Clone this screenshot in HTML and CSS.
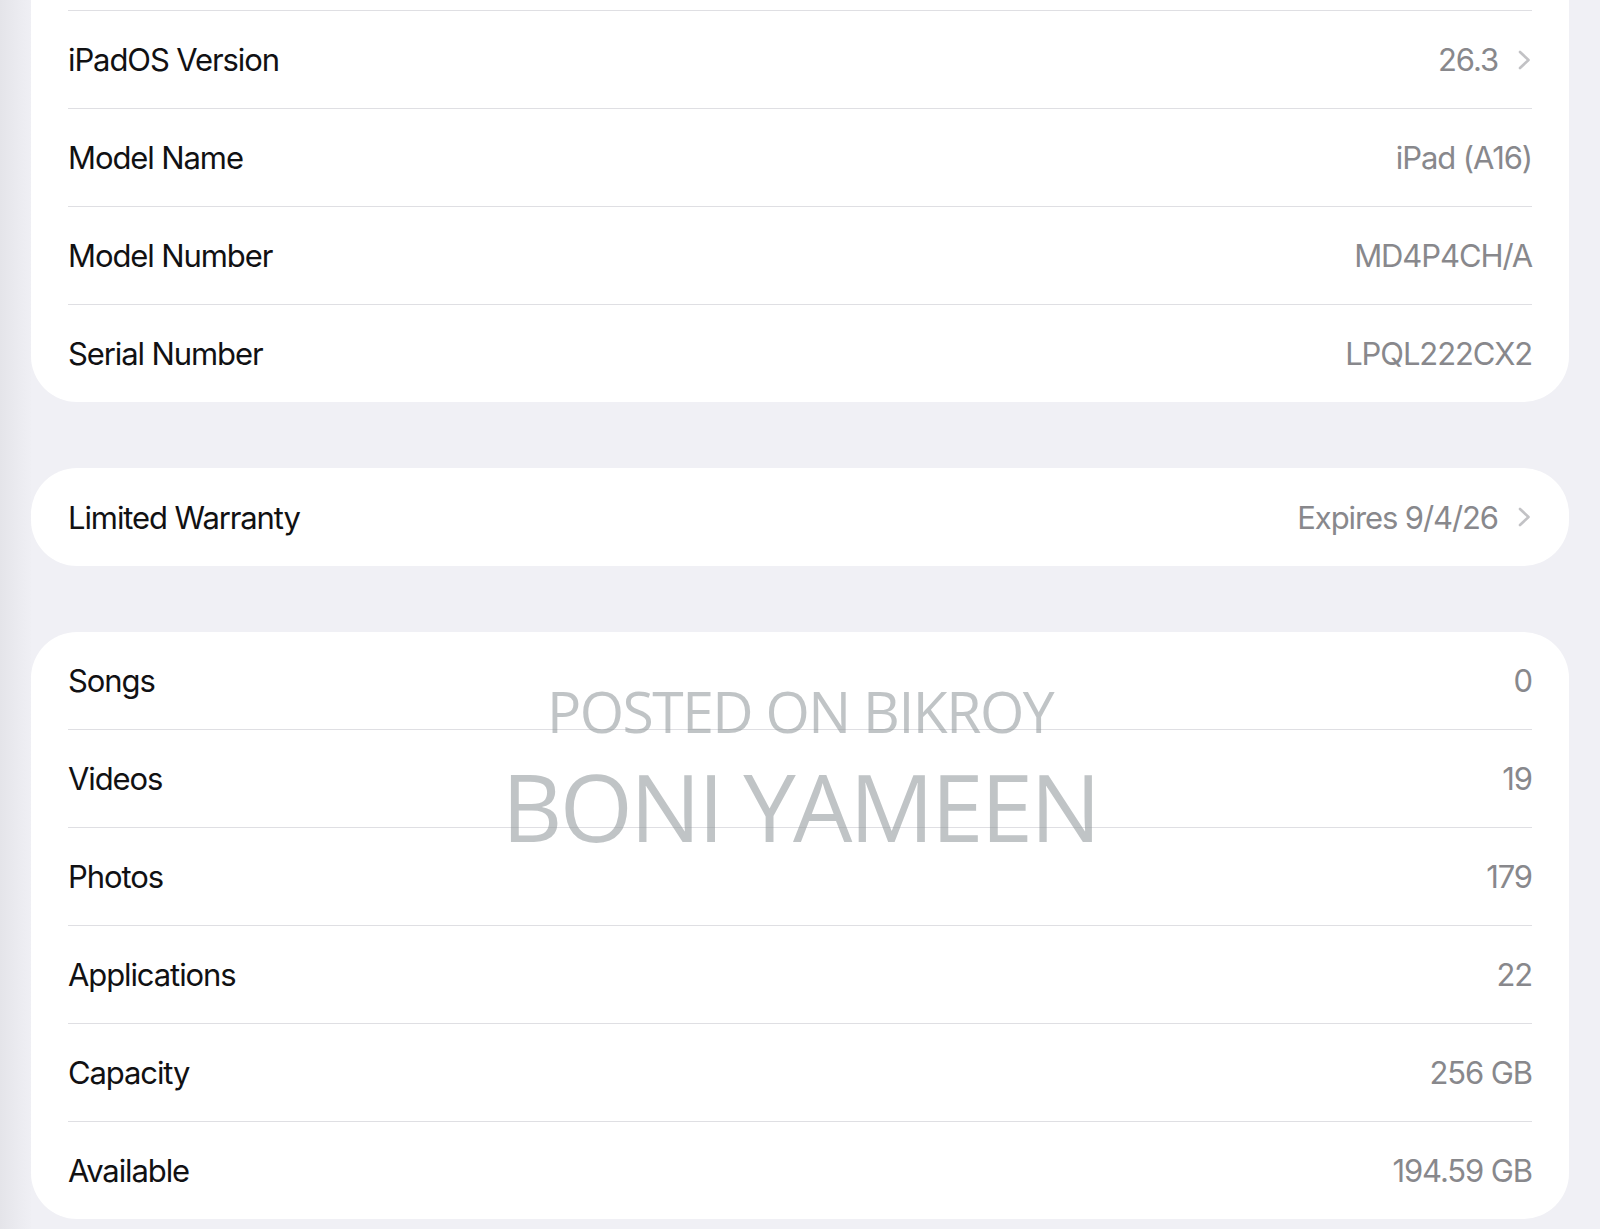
FILE: index.html
```html
<!DOCTYPE html>
<html lang="en">
<head>
<meta charset="utf-8">
<title>About</title>
<link rel="stylesheet" href="styles.css">
</head>
<body>
<div class="page">
  <div class="edge"></div>
  <main class="content">
    <section class="card card-first">
      <div class="row"><div class="row-inner"></div></div>
      <div class="row"><div class="row-inner"><span class="label">iPadOS Version</span><span class="value">26.3<svg class="chev" viewBox="0 0 13 20" width="13" height="20"><path d="M2 2 L10.5 10 L2 18" fill="none" stroke="currentColor" stroke-width="2.6" stroke-linecap="round" stroke-linejoin="round"/></svg></span></div></div>
      <div class="row"><div class="row-inner"><span class="label">Model Name</span><span class="value">iPad (A16)</span></div></div>
      <div class="row"><div class="row-inner"><span class="label">Model Number</span><span class="value">MD4P4CH/A</span></div></div>
      <div class="row"><div class="row-inner"><span class="label">Serial Number</span><span class="value">LPQL222CX2</span></div></div>
    </section>

    <section class="card card-single">
      <div class="row"><div class="row-inner"><span class="label">Limited Warranty</span><span class="value">Expires 9/4/26<svg class="chev" viewBox="0 0 13 20" width="13" height="20"><path d="M2 2 L10.5 10 L2 18" fill="none" stroke="currentColor" stroke-width="2.6" stroke-linecap="round" stroke-linejoin="round"/></svg></span></div></div>
    </section>

    <section class="card">
      <div class="row"><div class="row-inner"><span class="label">Songs</span><span class="value">0</span></div></div>
      <div class="row"><div class="row-inner"><span class="label">Videos</span><span class="value">19</span></div></div>
      <div class="row"><div class="row-inner"><span class="label">Photos</span><span class="value">179</span></div></div>
      <div class="row"><div class="row-inner"><span class="label">Applications</span><span class="value">22</span></div></div>
      <div class="row"><div class="row-inner"><span class="label">Capacity</span><span class="value">256 GB</span></div></div>
      <div class="row"><div class="row-inner"><span class="label">Available</span><span class="value">194.59 GB</span></div></div>
    </section>
  </main>
  <div class="watermark">
    <div class="wm-small">POSTED ON BIKROY</div>
    <div class="wm-big">BONI YAMEEN</div>
  </div>
</div>
</body>
</html>
```

FILE: styles.css
```css
html, body {
  margin: 0;
  padding: 0;
  height: 100%;
}
body {
  background: #f0f0f5;
  font-family: "Inter", "Roboto", "Liberation Sans", sans-serif;
  overflow: hidden;
}
.page {
  position: relative;
  width: 1600px;
  height: 1229px;
  overflow: hidden;
  display: flex;
  background: #f0f0f5;
}
.edge {
  width: 31px;
  flex: none;
  background: linear-gradient(to right, #e4e4e9 0%, #ebebf0 60%, #efeff4 100%);
}
.content {
  flex: 1;
  padding-right: 31px;
  display: flex;
  flex-direction: column;
  gap: 66px;
}
.card {
  background: #ffffff;
  border-radius: 46px;
}
.card-first {
  margin-top: -87px;
}
.row {
  padding: 0 37px 0 37px;
}
.row-inner {
  height: 97px;
  border-top: 1px solid #dfdfe3;
  display: flex;
  align-items: center;
  justify-content: space-between;
  font-size: 31px;
  letter-spacing: -1.1px;
}
.row:first-child .row-inner {
  border-top: none;
}
.card-single .row-inner {
  height: 98px;
}
.label {
  color: #111113;
}
.value {
  color: #88888c;
  display: flex;
  align-items: center;
}
.chev {
  color: #c2c2c5;
  margin-left: 20px;
  margin-right: 1px;
}
.watermark {
  position: absolute;
  left: 0;
  right: 0;
  top: 676px;
  display: flex;
  flex-direction: column;
  align-items: center;
  font-family: "Open Sans", "Noto Sans", sans-serif;
  color: rgba(140, 148, 152, 0.55);
  pointer-events: none;
}
.wm-small {
  font-size: 57px;
  line-height: 70px;
  letter-spacing: -1.5px;
}
.wm-big {
  font-size: 94px;
  line-height: 100px;
  letter-spacing: -2.8px;
  margin-top: 10px;
}
```
